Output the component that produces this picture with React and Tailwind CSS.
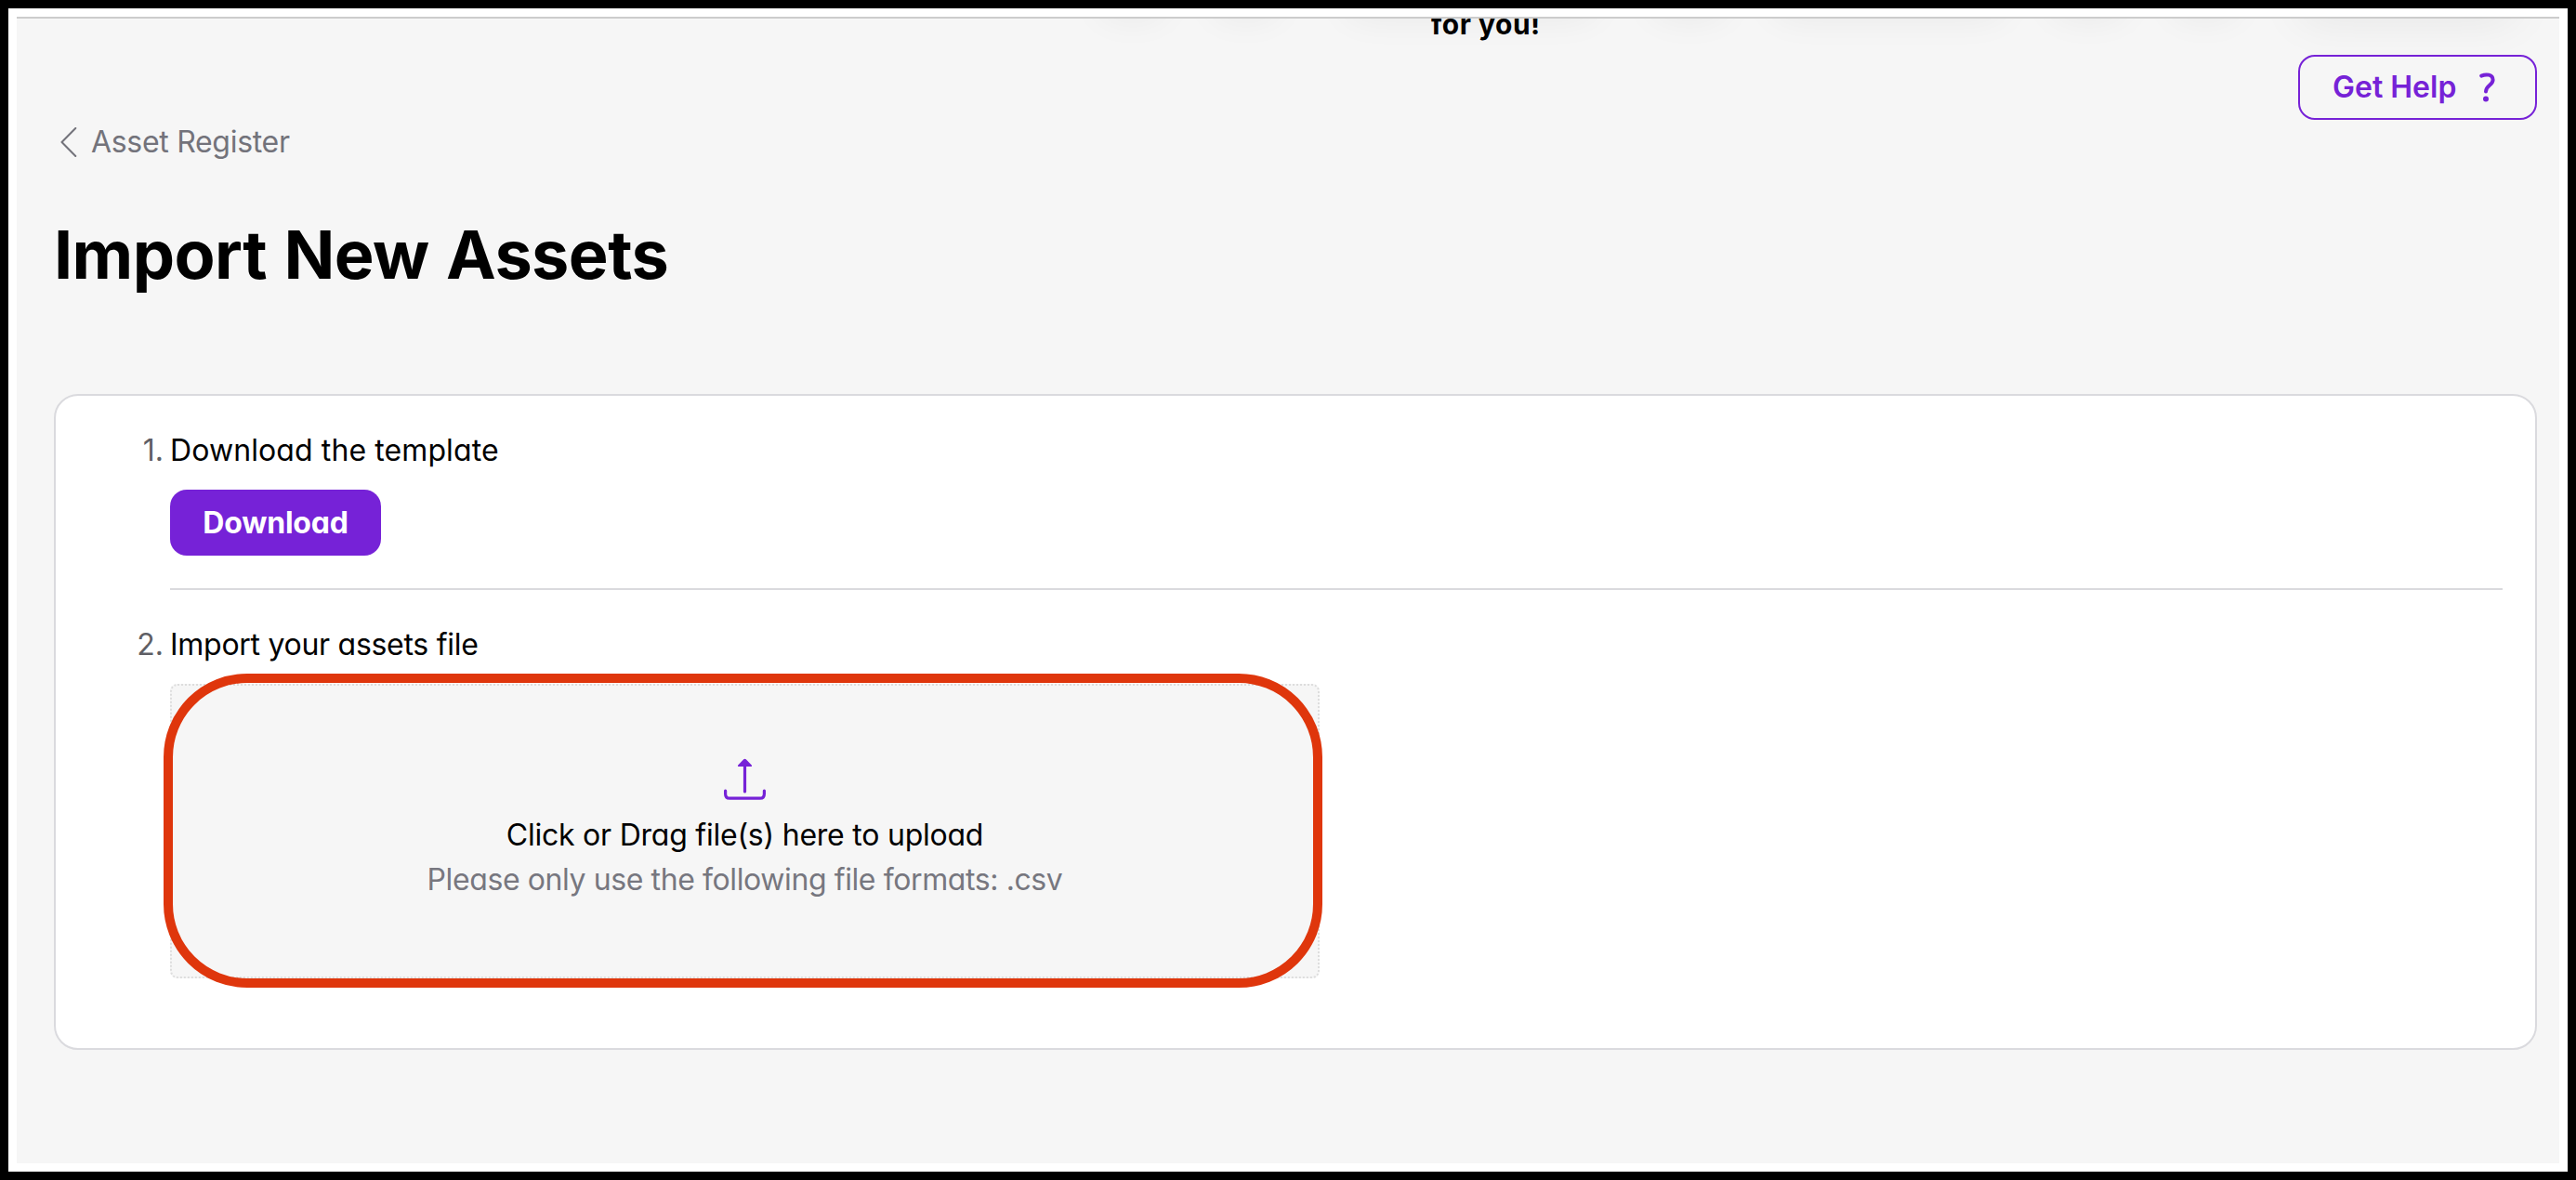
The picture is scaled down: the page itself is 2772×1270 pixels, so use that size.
const steps = [
  { label: 'Download the template', spacing: 'tracking-[0.1px]' },
  { label: 'Import your assets file', spacing: 'tracking-[-0.28px]' },
]

const bannerShadows = [
  'left-[1166px] w-[70px]',
  'left-[1288px] w-[70px]',
  'left-[1430px] w-[270px]',
  'left-[1760px] w-[80px]',
  'left-[1890px] w-[250px]',
  'left-[2190px] w-[80px]',
  'left-[2320px] w-[70px]',
]

function BackIcon() {
  return (
    <svg width="18" height="32" viewBox="0 0 18 32" fill="none" className="block">
      <path d="M16.3 1 1.5 16 16.3 31" stroke="currentColor" strokeWidth="2" strokeLinecap="round" strokeLinejoin="round" />
    </svg>
  )
}

function UploadIcon() {
  return (
    <svg width="45" height="46" viewBox="0 0 45 46" fill="none" className="block text-[#7622d7]">
      <path d="M22.5 6V36" stroke="currentColor" strokeWidth="3.2" strokeLinecap="round" />
      <path
        d="M21.2 1.2 15.2 7.4C14.6 8.2 15 9 16 9H29C30 9 30.4 8.2 29.8 7.4L23.8 1.2C23 .5 22 .5 21.2 1.2Z"
        fill="currentColor"
      />
      <path
        d="M1.6 35V38.5C1.6 41.5 3 43.2 6 43.2H39C42 43.2 43.4 41.5 43.4 38.5V35"
        stroke="currentColor"
        strokeWidth="3.2"
        strokeLinecap="round"
      />
    </svg>
  )
}

function HelpIcon() {
  return (
    <svg width="18" height="32" viewBox="0 0 18 32" fill="none" className="block">
      <path
        d="M2.2 3.6C7 1.6 14.6 1.6 14.6 8C14.6 13.6 7 14 7 20.4"
        stroke="currentColor"
        strokeWidth="4"
        strokeLinecap="round"
      />
      <circle cx="7" cy="28.4" r="3" fill="currentColor" />
    </svg>
  )
}

function StepLabel({ index }) {
  const { label, spacing } = steps[index]
  return (
    <div className="flex h-10 items-center leading-10">
      <span className="w-[117px] pr-px text-right text-[#5f5f65]">{index + 1}.</span>
      <span className={`ml-[6px] text-black ${spacing}`}>{label}</span>
    </div>
  )
}

export default function App() {
  return (
    <div className="h-[1270px] w-[2772px] border-[9px] border-black bg-white p-[9px] font-['Inter',sans-serif] text-[32px] [font-feature-settings:'cv11']">
      <div className="relative h-[1234px] overflow-hidden border-t-2 border-[#cccccc] bg-[#f6f6f6]">
        {/* Soft shadows and last line of the banner scrolled under the header */}
        {bannerShadows.map((position) => (
          <div
            key={position}
            className={`absolute -top-10 h-9 rounded-full shadow-[0_0_42px_rgba(0,0,0,0.07)] ${position}`}
          />
        ))}
        <div className="absolute -top-10 left-[2455px] h-10 w-[235px] rounded-2xl shadow-[0_0_50px_rgba(0,0,0,0.08)]" />
        <p className="absolute top-[-14px] left-[1522px] text-[30px] leading-10 font-bold tracking-[0.5px] whitespace-nowrap text-black">
          for you!
        </p>

        <div className="flex flex-col px-6 pl-10">
          <button className="mt-[39px] flex h-[70px] w-[257px] items-center self-end rounded-[18px] border-2 border-[#7622d7] pl-[35px] font-semibold text-[#7622d7]">
            <span>Get Help</span>
            <span className="ml-[25px]">
              <HelpIcon />
            </span>
          </button>

          <a className="mt-[4px] flex h-10 items-center pl-[7px] text-[#73737b]">
            <BackIcon />
            <span className="ml-[15px] tracking-[-0.3px]">Asset Register</span>
          </a>

          <h1 className="mt-[49px] text-[72px] leading-[104px] font-bold tracking-[-0.6px] text-black [word-spacing:2px]">
            Import New Assets
          </h1>

          <section className="mt-[98px] h-[706px] rounded-[26px] border-2 border-[#dadade] bg-white pt-[39px]">
            <StepLabel index={0} />
            <button className="mt-[22px] ml-[123px] block h-[71px] w-[227px] rounded-[18px] bg-[#7622d7] text-center font-bold tracking-[-0.2px] text-white">
              Download
            </button>
            <hr className="mt-[35px] mr-[35px] ml-[123px] border-t-2 border-[#dadade]" />
            <div className="mt-[39px]">
              <StepLabel index={1} />
            </div>
            <div className="relative mt-[22px] ml-[123px] flex h-[317px] w-[1237px] flex-col items-center rounded-lg border-2 border-dotted border-[#dddddd] bg-[#f6f6f6] pt-[78px]">
              <UploadIcon />
              <p className="mt-[13px] leading-[48px] tracking-[-0.23px] text-black">
                Click or Drag file(s) here to upload
              </p>
              <p className="leading-[48px] tracking-[-0.4px] text-[#77777f]">
                Please only use the following file formats: .csv
              </p>
              <div className="absolute -top-[13px] -left-[9px] h-[338px] w-[1247px] rounded-[90px] border-10 border-[#df360c]" />
            </div>
          </section>
        </div>
      </div>
    </div>
  )
}
